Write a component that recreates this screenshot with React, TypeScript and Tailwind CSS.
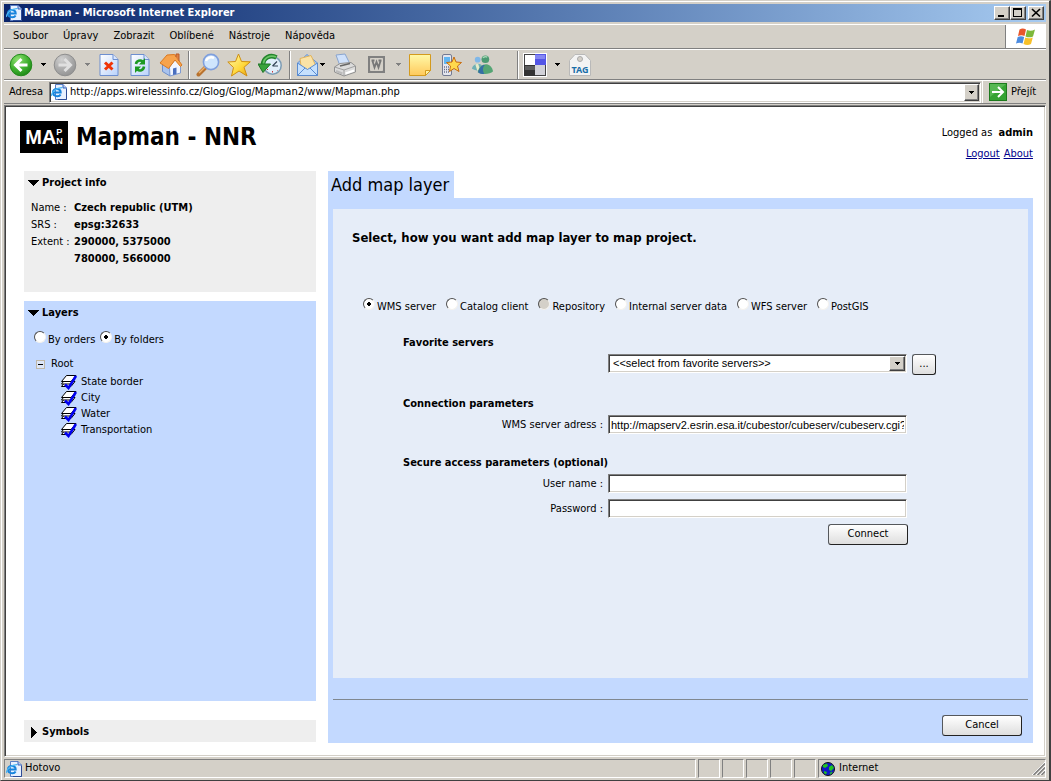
import React, { useState } from 'react'

const serverTypes = [
  { id: 'wms', label: 'WMS server' },
  { id: 'catalog', label: 'Catalog client' },
  { id: 'repository', label: 'Repository', disabled: true },
  { id: 'internal', label: 'Internal server data' },
  { id: 'wfs', label: 'WFS server' },
  { id: 'postgis', label: 'PostGIS' },
]

const menus = ['Soubor', 'Úpravy', 'Zobrazit', 'Oblíbené', 'Nástroje', 'Nápověda']
const layers = ['State border', 'City', 'Water', 'Transportation']

// Shared look of the old Windows controls
const sunken =
  'border border-t-[#808080] border-l-[#808080] border-b-white border-r-white bg-white shadow-[inset_1px_1px_0_#404040,inset_-1px_-1px_0_#d4d0c8]'
const raised =
  'border border-t-white border-l-white border-b-[#404040] border-r-[#404040] bg-[#d4d0c8] shadow-[inset_-1px_-1px_0_#808080]'
const glossy =
  'rounded-[3px] border border-[#55585c] border-r-[#222] border-b-[#222] bg-linear-to-b from-white to-[#dedede] text-center'
const heading = 'text-[11px] leading-[18px] font-bold'

/* ---------- icons ---------- */

const Triangle = ({ open }: { open: boolean }) => (
  <svg width="11" height="11" viewBox="0 0 11 11" shapeRendering="crispEdges">
    <path d={open ? 'M0 2H11L5.5 8Z' : 'M3 0L9 5.5L3 11Z'} />
  </svg>
)

const Caret = ({ color = '#000' }: { color?: string }) => (
  <svg width="5" height="3" viewBox="0 0 5 3" shapeRendering="crispEdges" className="shrink-0">
    <path d="M0 0H5V1H4V2H3V3H2V2H1V1H0Z" fill={color} />
  </svg>
)

const IePage = () => (
  <svg width="16" height="16" viewBox="0 0 16 16" className="shrink-0">
    <path d="M4.5.5H12L15.500 4V15.500H4.500Z" fill="#e8f1ff" stroke="#5a7ec4" />
    <path d="M12 .5V4H15.500" fill="#b6cdf5" stroke="#3a5fb4" />
    <path d="M15.500 5V15.500H7" fill="none" stroke="#2d4c96" />
    <path d="M2.500 8.500H9.700C9.700 3.800 2 3.800 2 8.500C2 13 8.300 13 9.600 10.500" fill="none" stroke="#1784dd" strokeWidth="2" />
    <path d="M.6 12C-.2 8.500 6 3 11.500 3.600" fill="none" stroke="#4cb6f2" strokeWidth="1.200" />
  </svg>
)

const RoundArrow = ({ forward }: { forward?: boolean }) => (
  <svg width="24" height="24" viewBox="0 0 24 24">
    <defs>
      <radialGradient id={forward ? 'fwd' : 'back'} cx=".35" cy=".25" r=".9">
        <stop offset="0" stopColor={forward ? '#d0d0d0' : '#8ee070'} />
        <stop offset=".55" stopColor={forward ? '#a8a8a8' : '#3cae2c'} />
        <stop offset="1" stopColor={forward ? '#8c8c8c' : '#157a10'} />
      </radialGradient>
    </defs>
    <circle cx="12" cy="12" r="10.8" fill={forward ? 'url(#fwd)' : 'url(#back)'} stroke={forward ? '#8e8e8e' : '#238a1c'} />
    <path
      d={forward ? 'M5.5 12H17M11.500 6L17.500 12L11.500 18' : 'M18.500 12H7M12.500 6L6.500 12L12.500 18'}
      fill="none"
      stroke={forward ? '#e0e0e0' : '#fff'}
      strokeWidth="3"
    />
  </svg>
)

const Sheet = ({ children }: { children: React.ReactNode }) => (
  <svg width="20" height="24" viewBox="0 0 20 24">
    <defs>
      <linearGradient id="sheet" x1="0" y1="0" x2="1" y2="1">
        <stop offset="0" stopColor="#fff" />
        <stop offset="1" stopColor="#b9d2fb" />
      </linearGradient>
    </defs>
    <path d="M1 1.500H14L19 6.500V22.500H1Z" fill="url(#sheet)" stroke="#6d8fd0" />
    <path d="M14 1.500V6.500H19" fill="#d9e6ff" stroke="#6d8fd0" />
    {children}
  </svg>
)

const StopIcon = () => (
  <Sheet>
    <path d="M6 9.500L13.500 16.500M13.500 9.500L6 16.500" stroke="#f03408" strokeWidth="3" />
  </Sheet>
)

const RefreshIcon = () => (
  <Sheet>
    <path d="M6 11C6.500 7.500 10.500 6.500 12.500 8.500" fill="none" stroke="#1c9a22" strokeWidth="2.600" />
    <path d="M15 5V11.500H9Z" fill="#1c9a22" />
    <path d="M14 13.500C13.500 17.500 9.500 18.500 7.500 16.500" fill="none" stroke="#1c9a22" strokeWidth="2.600" />
    <path d="M5 20V13.500H11Z" fill="#1c9a22" />
  </Sheet>
)

const HomeIcon = () => (
  <svg width="24" height="24" viewBox="0 0 24 24">
    <path d="M3.500 9L11 16V23L3.500 18.500Z" fill="#a9c3ee" stroke="#6f8fcb" />
    <path d="M10.500 14L16.500 6L21.500 12V20L11 23Z" fill="#f2f6ff" stroke="#7f9bd3" />
    <path d="M8 2L15.500 1.500L23 12L21.500 13.500L16 7L9.500 15.500L1 10Z" fill="#f7a34c" stroke="#d9781f" />
    <path d="M17 4V1H20V8" fill="#e08040" stroke="#b85a28" />
    <path d="M14 15.500L17.500 14.500V21L14 22Z" fill="#4a6fbf" />
  </svg>
)

const SearchIcon = () => (
  <svg width="24" height="24" viewBox="0 0 24 24">
    <path d="M9.500 14.500L2.500 21.500" stroke="#b8722e" strokeWidth="4" strokeLinecap="round" />
    <path d="M9 14L3 20" stroke="#eeb26a" strokeWidth="1.500" />
    <circle cx="15" cy="9" r="7.600" fill="#cfe5fd" stroke="#7f9fdd" strokeWidth="1.600" />
    <path d="M10 8C11 4.500 15 3.500 18 5" fill="none" stroke="#fff" strokeWidth="2.500" />
  </svg>
)

const StarIcon = () => (
  <svg width="24" height="24" viewBox="0 0 24 24">
    <defs>
      <linearGradient id="star" x1="0" y1="0" x2="1" y2="1">
        <stop offset="0" stopColor="#fffbb0" />
        <stop offset=".6" stopColor="#ffd83a" />
        <stop offset="1" stopColor="#e39a10" />
      </linearGradient>
    </defs>
    <path d="M11.500 1L14.500 8.500L23.300 8.800L17 14.300L20 23L12 18L4.500 23L6.500 14.500L.8 9L8.500 8.500Z" fill="url(#star)" stroke="#cf8f12" strokeLinejoin="round" />
  </svg>
)

const HistoryIcon = () => (
  <svg width="24" height="24" viewBox="0 0 24 24">
    <circle cx="14.500" cy="12.500" r="8.700" fill="#e0eefa" stroke="#7c9cb4" strokeWidth="1.500" />
    <path d="M14.500 13L19 8.500M14.500 13H20" stroke="#345" strokeWidth="1.200" />
    <path d="M14.500 18V19.500M9 17L10 16M19.500 17.500L20 18" stroke="#c33" />
    <path d="M18.500 4.500C12 1 5 5 5 12" fill="none" stroke="#23842c" strokeWidth="4.500" />
    <path d="M18 4C12 1.500 5.500 5 5.500 11" fill="none" stroke="#6cc668" strokeWidth="1.800" />
    <path d="M0 11H12.500L5 19.500Z" fill="#3aa33c" stroke="#1d7526" />
  </svg>
)

const MailIcon = () => (
  <svg width="24" height="24" viewBox="0 0 24 24">
    <path d="M1.500 10L11 1.500L21.500 10V22.500H1.500Z" fill="#9cc4f4" stroke="#6a96d6" />
    <path d="M4 5.500L15 2.500L19.500 12L12 17L5 13Z" fill="#fbe3a6" stroke="#e2b45c" />
    <path d="M1.500 10L11.500 16.500L21.500 10V22.500H1.500Z" fill="#c5e0fd" stroke="#5b8cd0" />
    <path d="M1.500 22.500L9 15M21.500 22.500L14 15" stroke="#5b8cd0" />
  </svg>
)

const PrinterIcon = () => (
  <svg width="24" height="24" viewBox="0 0 24 24">
    <path d="M3 2L12 1L17 11L7 13Z" fill="#cfe1fb" stroke="#8aa5cf" />
    <path d="M1.500 14L7 10.500L18 9.500L22.500 13V19L11 23L1.500 19Z" fill="#dcdcdc" stroke="#909090" />
    <path d="M1.500 14L11 17L22.500 13M11 17V23" fill="none" stroke="#a0a0a0" />
    <path d="M7 13L17 10.500" stroke="#666" strokeWidth="1.500" />
    <path d="M12.500 20.500L21 17.500" stroke="#fff" strokeWidth="2" />
    <path d="M3 18L9.500 20.500" stroke="#bbb" strokeWidth="2" />
  </svg>
)

const WordIcon = () => (
  <svg width="17" height="17" viewBox="0 0 17 17">
    <rect width="17" height="17" fill="#808080" />
    <path d="M2.500 14.500V2.500H14.500V14.500Z" fill="#d4d0c8" stroke="#d4d0c8" />
    <path d="M4.500 5L6.500 11.500L8.500 6L10.500 11.500L12.500 5M3.500 4.500H6.500M10.500 4.500H13.500" fill="none" stroke="#777" strokeWidth="1.800" />
  </svg>
)

const NoteIcon = () => (
  <svg width="22" height="22" viewBox="0 0 22 22">
    <defs>
      <linearGradient id="note" x1="0" y1="0" x2="0" y2="1">
        <stop offset="0" stopColor="#fff9a8" />
        <stop offset="1" stopColor="#ffc95c" />
      </linearGradient>
    </defs>
    <path d="M.5.500H21.500V16.500L16.500 21.500H.5Z" fill="url(#note)" stroke="#d39a1e" />
    <path d="M21.500 16.500H16.500V21.500Z" fill="#fff2a0" stroke="#d39a1e" />
  </svg>
)

const PhoneIcon = () => (
  <svg width="21" height="24" viewBox="0 0 21 24">
    <rect x="1.500" y="1.500" width="9" height="21" rx="1.500" fill="#e4e6ee" stroke="#737a92" />
    <rect x="3" y="4" width="6" height="7" fill="#62b6f2" />
    <path d="M3 14H9M3 16.500H9M3 19H9" stroke="#69708c" strokeDasharray="1 1" strokeWidth="1.500" />
    <path d="M13 4L15 9L20.500 9.500L16.500 13L18 18.500L13 15.500L8.500 18.500L9.500 13L5.500 9.500L11 9Z" fill="#ffd94c" stroke="#c76a10" />
  </svg>
)

const PeopleIcon = () => (
  <svg width="25" height="24" viewBox="0 0 25 24">
    <circle cx="8" cy="6.500" r="3" fill="#7fb7e8" />
    <path d="M2 16C3 10 12 9 13 14V19C9 18.500 5 17.500 2 16Z" fill="#6fb0b4" />
    <path d="M7 11L9 17.500" stroke="#e6eccb" strokeWidth="3" />
    <circle cx="16" cy="6" r="4" fill="#4c9a72" />
    <path d="M8 19.500C10 9 22 8 24 18.500C21 22 12 22 8 19.500Z" fill="#55a574" />
    <path d="M8.500 19.500C10 14 13 11.500 15.500 12C12.500 15 13.500 18.500 15 21.500C12 21.500 10 21 8.500 19.500Z" fill="#356fa6" />
    <path d="M13.500 4.500C14.500 3 17 3 18 4" fill="none" stroke="#a7d9b6" strokeWidth="1.500" />
  </svg>
)

const SquaresIcon = () => (
  <svg width="24" height="24" viewBox="0 0 24 24" shapeRendering="crispEdges">
    <rect width="24" height="24" fill="#fff" />
    <rect x="1" y="1" width="22" height="22" fill="#444" />
    <rect x="2" y="2" width="10" height="10" fill="#fff" />
    <rect x="12" y="1" width="11" height="11" fill="#5456e6" />
    <rect x="12" y="2" width="10" height="4" fill="#8587f2" />
    <rect x="1" y="12" width="11" height="11" fill="#333" />
    <rect x="2" y="13" width="10" height="4" fill="#5d5d5d" />
    <rect x="12" y="12" width="10" height="10" fill="#d2d2d8" />
  </svg>
)

const TagIcon = () => (
  <svg width="24" height="24" viewBox="0 0 24 24">
    <path d="M7 1.500H17L22.500 7.500V22.500H1.500V7.500Z" fill="#f3f3f3" stroke="#b9b9b9" />
    <circle cx="12" cy="6" r="2.500" fill="#d4d0c8" stroke="#aaa" />
    <text x="12" y="20" fontSize="9" fontWeight="bold" textAnchor="middle" fill="#1a6fa8" fontFamily="'Noto Sans', sans-serif">
      TAG
    </text>
  </svg>
)

const WindowsFlag = () => (
  <svg width="20" height="18" viewBox="0 0 20 18">
    <path d="M3.500 1.500C6 0 8 .5 10 1.500L8.500 8C6.500 7 4.500 7 2 8Z" fill="#e8562a" />
    <path d="M11 2C13.500 3 16 3 19 1.500L17 8.500C14.500 9.800 12 9.500 9.500 8.500Z" fill="#7db83a" />
    <path d="M1.700 9C4 8 6 8 8.200 9L6.500 15.500C4.500 14.500 2.500 14.500 0 15.500Z" fill="#4b8be0" />
    <path d="M9.200 9.500C11.500 10.500 14 10.700 16.800 9.500L15 16C12.500 17.300 10 17.200 7.500 16Z" fill="#f7c02a" />
  </svg>
)

const GoIcon = () => (
  <svg width="18" height="18" viewBox="0 0 18 18">
    <rect x=".5" y=".5" width="17" height="17" fill="#35a332" stroke="#1d7a1d" />
    <path d="M1 1H17L1 14Z" fill="#6cc468" opacity=".6" />
    <path d="M3 9H14M9 4L14 9L9 14" fill="none" stroke="#fff" strokeWidth="2" />
  </svg>
)

const GlobeIcon = () => (
  <svg width="14" height="14" viewBox="0 0 14 14">
    <circle cx="7" cy="7" r="6.500" fill="#1018c8" stroke="#111" />
    <path d="M2 3L6 1.500L7 4L4 6L2 5ZM8 5L11 3L13 6L10 9L8 8ZM3 9L6 10L5 12.500L3 11Z" fill="#1fc41f" />
    <path d="M9 12L11 10" stroke="#1fc41f" strokeWidth="1.500" />
  </svg>
)

const LayerIcon = () => (
  <svg width="16" height="16" viewBox="0 0 16 16" className="shrink-0">
    <path d="M.5 12.500L4.500 7.500H14L10 12.500Z" fill="#fff" stroke="#000" />
    <path d="M.5 10L4.500 5H14L10 10Z" fill="#fff" stroke="#000" />
    <path d="M.5 7.500L5.500 1.500H15L10 7.500Z" fill="#fff" stroke="#000" />
    <path d="M4 10.500L7.500 14L15 2" fill="none" stroke="#0000f0" strokeWidth="2.600" />
  </svg>
)

const Grip = () => (
  <svg width="13" height="13" viewBox="0 0 13 13">
    <path d="M0 13L13 0M4 13L13 4M8 13L13 8" stroke="#fff" />
    <path d="M1.500 13L13 1.500M5.500 13L13 5.500M9.500 13L13 9.500" stroke="#808080" strokeWidth="1.500" />
  </svg>
)

const MinimizeIcon = () => (
  <svg width="10" height="10" viewBox="0 0 10 10" shapeRendering="crispEdges">
    <path d="M1 7H7V9H1Z" />
  </svg>
)

const MaximizeIcon = () => (
  <svg width="10" height="10" viewBox="0 0 10 10" shapeRendering="crispEdges">
    <path d="M0 0H9V9H0ZM1 2V8H8V2Z" fillRule="evenodd" />
  </svg>
)

const CloseIcon = () => (
  <svg width="10" height="10" viewBox="0 0 10 10">
    <path d="M1 1L9 8.500M9 1L1 8.500" stroke="#000" strokeWidth="1.700" />
  </svg>
)

/* ---------- small pieces ---------- */

const Radio = ({
  name,
  label,
  checked,
  disabled,
  onChange,
}: {
  name: string
  label: string
  checked: boolean
  disabled?: boolean
  onChange: () => void
}) => (
  <label className="flex items-start gap-[2px] leading-[18px] whitespace-nowrap">
    <input
      type="radio"
      name={name}
      checked={checked}
      disabled={disabled}
      onChange={onChange}
      className="size-[12px] appearance-none rounded-full border border-t-[#505050] border-r-[#f4f2ee] border-b-[#f4f2ee] border-l-[#505050] bg-white checked:bg-[radial-gradient(circle,#000_2px,#fff_2px)] disabled:bg-[#d4d0c8]"
    />
    {label}
  </label>
)

const ToolButton = ({ label, children }: { label: string; children: React.ReactNode }) => (
  <button aria-label={label} className="flex w-[24px] shrink-0 items-center justify-center">
    {children}
  </button>
)

const Separator = () => <div className="h-[28px] w-[2px] border-r border-l border-r-white border-l-[#808080]" />

const TitleBar = () => (
  <div className="flex h-[18px] items-center bg-linear-to-r from-[#0a246a] to-[#a6caf0] pr-[2px] pl-[2px]">
    <IePage />
    <h1 className="flex-1 pl-[2px] text-[11px] font-bold text-white">Mapman - Microsoft Internet Explorer</h1>
    <button aria-label="Minimize" className={`flex h-[14px] w-[16px] items-center justify-center ${raised}`}>
      <MinimizeIcon />
    </button>
    <button aria-label="Maximize" className={`flex h-[14px] w-[16px] items-center justify-center ${raised}`}>
      <MaximizeIcon />
    </button>
    <button aria-label="Close" className={`ml-[2px] flex h-[14px] w-[16px] items-center justify-center ${raised}`}>
      <CloseIcon />
    </button>
  </div>
)

const MenuBar = () => (
  <div className="mt-[2px] flex h-[25px] border-t border-b border-t-white border-b-[#808080]">
    <nav className="flex flex-1 items-center gap-[15px] border-r border-[#808080] pl-[9px]">
      {menus.map((m) => (
        <button key={m}>{m}</button>
      ))}
    </nav>
    <div className="flex w-[40px] items-center justify-center bg-white">
      <WindowsFlag />
    </div>
  </div>
)

const ToolBar = () => (
  <div className="flex h-[31px] items-center border-t border-b border-t-white border-b-[#808080] pl-[5px]">
    <ToolButton label="Back">
      <RoundArrow />
    </ToolButton>
    <div className="flex w-[20px] justify-center">
      <Caret />
    </div>
    <ToolButton label="Forward">
      <RoundArrow forward />
    </ToolButton>
    <div className="flex w-[20px] justify-center">
      <Caret color="#808080" />
    </div>
    <div className="flex gap-[7px]">
      <ToolButton label="Stop">
        <StopIcon />
      </ToolButton>
      <ToolButton label="Refresh">
        <RefreshIcon />
      </ToolButton>
      <ToolButton label="Home">
        <HomeIcon />
      </ToolButton>
    </div>
    <div className="mr-[6px] ml-[5px]">
      <Separator />
    </div>
    <div className="flex gap-[7px]">
      <ToolButton label="Search">
        <SearchIcon />
      </ToolButton>
      <ToolButton label="Favorites">
        <StarIcon />
      </ToolButton>
      <ToolButton label="History">
        <HistoryIcon />
      </ToolButton>
    </div>
    <div className="mr-[5px] ml-[7px]">
      <Separator />
    </div>
    <ToolButton label="Mail">
      <MailIcon />
    </ToolButton>
    <Caret />
    <div className="ml-[8px] flex gap-[7px]">
      <ToolButton label="Print">
        <PrinterIcon />
      </ToolButton>
      <ToolButton label="Edit">
        <WordIcon />
      </ToolButton>
    </div>
    <div className="flex w-[20px] justify-center">
      <Caret color="#808080" />
    </div>
    <div className="flex gap-[7px]">
      <ToolButton label="Note">
        <NoteIcon />
      </ToolButton>
      <ToolButton label="Mobile favorites">
        <PhoneIcon />
      </ToolButton>
      <ToolButton label="Messenger">
        <PeopleIcon />
      </ToolButton>
    </div>
    <div className="mr-[4px] ml-[23px]">
      <Separator />
    </div>
    <ToolButton label="Bookmarks">
      <SquaresIcon />
    </ToolButton>
    <div className="flex w-[21px] justify-center">
      <Caret />
    </div>
    <ToolButton label="Tag">
      <TagIcon />
    </ToolButton>
  </div>
)

const AddressBar = () => (
  <div className="flex h-[24px] items-center border-t border-b border-t-white border-b-[#808080] pl-[5px]">
    <label htmlFor="address" className="w-[40px]">
      Adresa
    </label>
    <div className={`flex h-[21px] flex-1 items-center p-[1px] ${sunken}`}>
      <IePage />
      <input
        id="address"
        defaultValue="http://apps.wirelessinfo.cz/Glog/Glog/Mapman2/www/Mapman.php"
        className="ml-[3px] min-w-0 flex-1 bg-transparent outline-none"
      />
      <button aria-label="Show addresses" className={`flex h-full w-[15px] items-center justify-center ${raised}`}>
        <Caret />
      </button>
    </div>
    <button className="ml-[1px] flex h-full w-[64px] items-center gap-[4px] border-l border-white pl-[6px]">
      <GoIcon />
      Přejít
    </button>
  </div>
)

const StatusBar = () => {
  const cell = 'h-[19px] border border-t-[#808080] border-l-[#808080] border-b-white border-r-white'
  return (
    <footer className="mt-[2px] flex gap-[2px]">
      <div className={`flex flex-1 items-center gap-[3px] pl-[1px] ${cell}`}>
        <IePage />
        Hotovo
      </div>
      {[1, 2, 3, 4, 5].map((n) => (
        <div key={n} className={`w-[22px] ${cell}`} />
      ))}
      <div className={`flex w-[228px] items-center pl-[2px] ${cell}`}>
        <GlobeIcon />
        <span className="flex-1 pl-[4px]">Internet</span>
        <Grip />
      </div>
    </footer>
  )
}

const ProjectInfo = () => (
  <section className="min-h-[121px] bg-[#eeeeee] pt-[3px] pl-[4px]">
    <h3 className={`flex items-center gap-[3px] ${heading}`}>
      <Triangle open />
      Project info
    </h3>
    <table className="mt-[7px] ml-[3px] leading-[17px]">
      <tbody>
        <tr>
          <td className="w-[43px]">Name :</td>
          <td className="font-bold">Czech republic (UTM)</td>
        </tr>
        <tr>
          <td>SRS :</td>
          <td className="font-bold">epsg:32633</td>
        </tr>
        <tr>
          <td className="whitespace-nowrap">Extent :</td>
          <td className="font-bold">290000, 5375000</td>
        </tr>
        <tr>
          <td></td>
          <td className="font-bold">780000, 5660000</td>
        </tr>
      </tbody>
    </table>
  </section>
)

const LayersPanel = () => {
  const [order, setOrder] = useState('folders')

  return (
    <section className="mt-[9px] flex-1 bg-[#c3d9ff] pt-[3px] pl-[4px]">
      <h3 className={`flex items-center gap-[3px] ${heading}`}>
        <Triangle open />
        Layers
      </h3>
      <div className="mt-[9px] ml-[6px] flex gap-[5px]">
        <Radio name="order" label="By orders" checked={order === 'orders'} onChange={() => setOrder('orders')} />
        <Radio name="order" label="By folders" checked={order === 'folders'} onChange={() => setOrder('folders')} />
      </div>
      <div className="mt-[6px] ml-[8px] flex items-center gap-[6px] leading-[18px]">
        <button
          aria-label="Collapse"
          className="flex size-[9px] items-center justify-center border border-[#c0b8a8] bg-[#dce6f8]"
        >
          <span className="h-px w-[5px] bg-black" />
        </button>
        Root
      </div>
      <ul className="mt-[1px] ml-[33px] leading-[16px]">
        {layers.map((l) => (
          <li key={l} className="flex items-center gap-[4px]">
            <LayerIcon />
            {l}
          </li>
        ))}
      </ul>
    </section>
  )
}

const ServerForm = () => {
  const [type, setType] = useState('wms')
  const row = 'flex gap-[5px]'
  const label = 'w-[200px] text-right leading-[19px]'
  const field = `h-[19px] w-[299px] font-['Liberation_Sans',sans-serif] outline-none ${sunken}`

  return (
    <form className="flex-1 bg-[#e6edf8] pt-[20px]">
      <h3 className="pl-[19px] text-[13px] leading-[18px] font-bold">
        Select, how you want add map layer to map project.
      </h3>
      <div className="mt-[51px] flex gap-[10px] pl-[30px]">
        {serverTypes.map((s) => (
          <Radio
            key={s.id}
            name="type"
            label={s.label}
            disabled={s.disabled}
            checked={type === s.id}
            onChange={() => setType(s.id)}
          />
        ))}
      </div>

      <div className="mt-[18px] ml-[70px] flex flex-col gap-[20px]">
        <section>
          <h4 className={heading}>Favorite servers</h4>
          <div className={`mt-[2px] ${row}`}>
            <span className="w-[200px]" />
            <div className="relative">
              <select aria-label="Favorite servers" className={`appearance-none px-[4px] ${field}`}>
                <option>&lt;&lt;select from favorite servers&gt;&gt;</option>
              </select>
              <span
                className={`pointer-events-none absolute top-[2px] right-[2px] flex h-[15px] w-[16px] items-center justify-center ${raised}`}
              >
                <Caret />
              </span>
            </div>
            <button type="button" className={`h-[21px] w-[24px] ${glossy}`}>
              ...
            </button>
          </div>
        </section>

        <section>
          <h4 className={heading}>Connection parameters</h4>
          <div className={`mt-[2px] ${row}`}>
            <label htmlFor="server" className={label}>
              WMS server adress :
            </label>
            <input
              id="server"
              className={`px-[2px] ${field}`}
              defaultValue="http://mapserv2.esrin.esa.it/cubestor/cubeserv/cubeserv.cgi?"
            />
          </div>
        </section>

        <section>
          <h4 className={heading}>Secure access parameters (optional)</h4>
          <div className="mt-[2px] flex flex-col gap-[6px]">
            <div className={row}>
              <label htmlFor="user" className={label}>
                User name :
              </label>
              <input id="user" className={`px-[2px] ${field}`} />
            </div>
            <div className={row}>
              <label htmlFor="password" className={label}>
                Password :
              </label>
              <input id="password" type="password" className={`px-[2px] ${field}`} />
            </div>
            <div className="flex w-[505px] justify-end">
              <button type="button" className={`h-[21px] w-[80px] ${glossy}`}>
                Connect
              </button>
            </div>
          </div>
        </section>
      </div>
    </form>
  )
}

const App = () => {
  return (
    <div className="flex min-h-screen flex-col border-t border-r-2 border-b border-l border-t-[#d4d0c8] border-r-[#404040] border-b-[#404040] border-l-[#d4d0c8] bg-[#d4d0c8] font-['DejaVu_Sans_Condensed',sans-serif] text-[11px] text-black">
      <div className="flex flex-1 flex-col border-t border-l border-white pt-[2px] pr-[3px] pb-[2px] pl-[2px]">
        <TitleBar />
        <MenuBar />
        <ToolBar />
        <AddressBar />

        <main className={`mt-px flex flex-1 flex-col pr-[12px] pb-[13px] pl-px ${sunken}`}>
          <header className="flex items-start justify-between pt-[15px] pl-[14px]">
            <div className="flex items-center gap-[8px]">
              <div className="flex h-[32px] w-[48px] items-center justify-center bg-black text-white">
                <span className="font-['Liberation_Sans',sans-serif] text-[20px] leading-[32px] font-bold">MA</span>
                <span className="flex flex-col font-['Liberation_Sans',sans-serif] text-[9px] leading-[9px] font-bold">
                  <span>P</span>
                  <span>N</span>
                </span>
              </div>
              <h2 className="text-[24px] leading-[32px] font-bold">Mapman - NNR</h2>
            </div>
            <div className="pt-px text-right leading-[21px]">
              <p>
                Logged as <b className="pl-[3px]">admin</b>
              </p>
              <p className="flex justify-end gap-[4px] text-[#00008b] underline">
                <a href="#logout">Logout</a>
                <a href="#about">About</a>
              </p>
            </div>
          </header>

          <div className="mt-[7px] flex flex-1 gap-[12px] pl-[18px]">
            <aside className="flex w-[292px] flex-col pb-[1px]">
              <ProjectInfo />
              <LayersPanel />
              <section className="mt-[19px] bg-[#eeeeee] pt-[3px] pb-[1px] pl-[4px]">
                <h3 className={`flex items-center gap-[3px] ${heading}`}>
                  <Triangle open={false} />
                  Symbols
                </h3>
              </section>
            </aside>

            <div className="flex flex-1 flex-col">
              <h2 className="self-start bg-[#c3d9ff] pr-[5px] pl-[3px] text-[18px] leading-[27px]">Add map layer</h2>
              <div className="flex flex-1 flex-col bg-[#c3d9ff] px-[5px] pt-[11px]">
                <ServerForm />
                <div className="mt-[21px] flex h-[44px] items-start justify-end border-t border-[#808890] pt-[15px] pr-[6px]">
                  <button className={`h-[21px] w-[80px] ${glossy}`}>Cancel</button>
                </div>
              </div>
            </div>
          </div>
        </main>

        <StatusBar />
      </div>
    </div>
  )
}

export default App
